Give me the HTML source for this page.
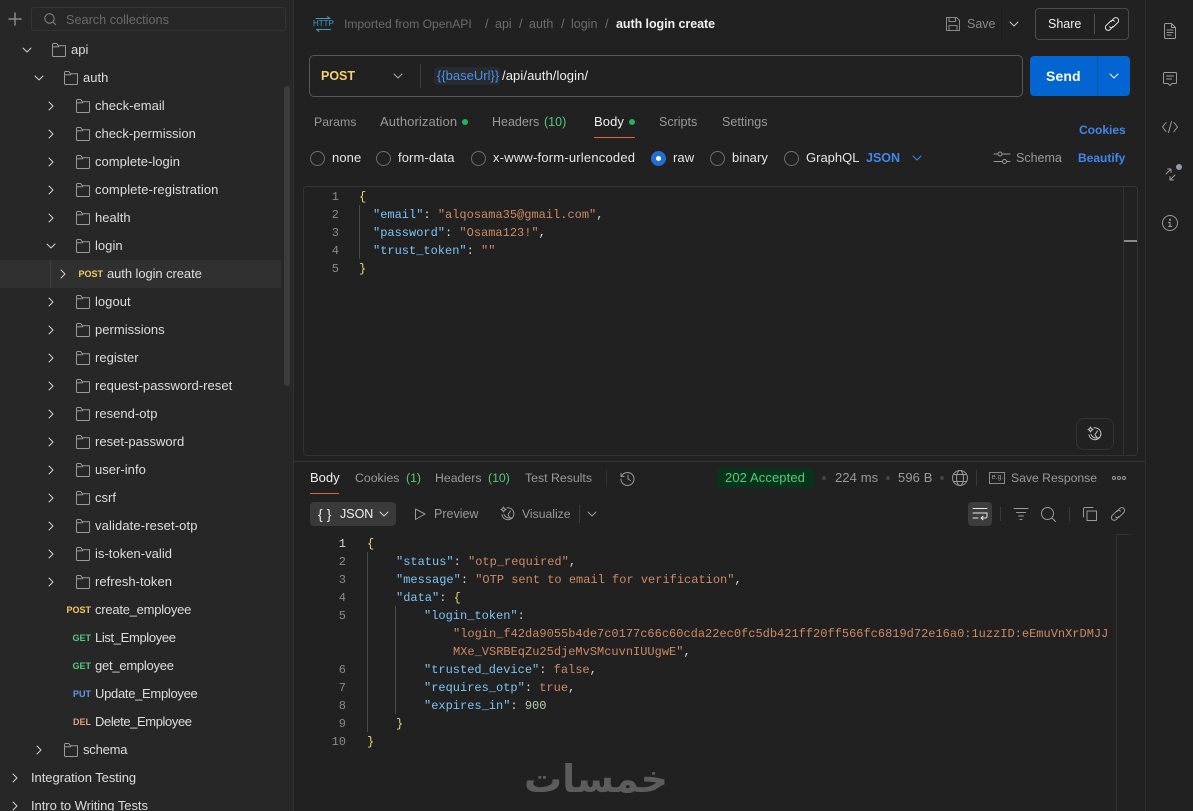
<!DOCTYPE html>
<html><head><meta charset="utf-8">
<style>
html,body{margin:0;padding:0;width:1193px;height:811px;overflow:hidden;background:#212121}
body{position:relative;font:13px/16px "Liberation Sans",sans-serif;color:#e6e6e6}
.t{position:absolute;white-space:nowrap;height:16px;letter-spacing:.1px}
.a{position:absolute}
svg.a{overflow:visible;fill:none;stroke:currentColor;stroke-width:1;stroke-linecap:round;stroke-linejoin:round}
.s{color:#dedede;letter-spacing:.03px}
.g{color:#9a9a9a}
.h{font-size:12.5px;letter-spacing:0}
.q{font-size:12.3px;letter-spacing:0}
.b{color:#3f87ee;font-weight:bold;font-size:12px;letter-spacing:0}
.gr{color:#4fc97f}
.m{position:absolute;font-size:9px;font-weight:bold;line-height:12px;height:12px;text-align:right;width:40px}
.c{position:absolute;white-space:pre;font:12px/18px "Liberation Mono",monospace;height:18px;color:#d4d4d4;margin-top:1px}
.n{position:absolute;width:24px;text-align:right;font:12px/18px "Liberation Mono",monospace;color:#8a8a8a;height:18px;margin-top:1px}
.k{color:#7cc4f4}.v{color:#ce8a63}.y{color:#e7d77a}
.r{position:absolute;width:13px;height:13px;border:1px solid #6e6e6e;border-radius:50%}
.l{position:absolute;background:#3a3a3a}
.ar{color:#d0d0d0}
</style></head><body>
<svg width="0" height="0" style="position:absolute">
<defs>
<symbol id="f" viewBox="0 0 14 14"><path d="M.5 12.5V1.5a1 1 0 0 1 1-1h3.2l1.8 2.3h7v9.7a1 1 0 0 1-1 1h-11a1 1 0 0 1-1-1zM.5 3.8h6l.5-1" /></symbol>
<symbol id="cr" viewBox="0 0 10 10"><path d="M3 1l4 4-4 4"/></symbol>
<symbol id="cd" viewBox="0 0 10 10"><path d="M1 3l4 4 4-4"/></symbol>
<symbol id="lk" viewBox="0 0 16 16"><path d="M7 5.500L9.800 2.500a2.800 2.800 0 0 1 4 4L9.500 10.800a2.800 2.800 0 0 1-4 0M9 10.500L6.200 13.500a2.800 2.800 0 0 1-4-4L6.500 5.200a2.800 2.800 0 0 1 4 0"/></symbol>
<symbol id="ai" viewBox="0 0 16 16"><path d="M7 1.800a6 6 0 1 1-5 7M10.500 5L8 8.500l2 3.500M4 8.500c2 3.500 5 4 7.500 3.200"/><path d="M3.500 1l.8 1.700 1.700.8-1.700.8-.8 1.700-.8-1.700L1 3.500l1.700-.8z"/></symbol>
</defs>
</svg>

<!-- sidebar -->
<div class="a" style="left:0;top:0;width:293px;height:811px;background:#272727"></div>
<div class="a" style="left:293px;top:0;width:1px;height:811px;background:#323232"></div>
<div class="a" style="left:284px;top:86px;width:6px;height:300px;background:#3c3c3c;border-radius:3px"></div>
<svg class="a" style="left:9px;top:13px;color:#8a8a8a;stroke-width:1.500" width="12" height="12"><path d="M6 0v12M0 6h12"/></svg>
<div class="a" style="left:31px;top:7px;width:253px;height:22px;border:1px solid #343434;border-radius:3px"></div>
<svg class="a" style="left:44px;top:13px;color:#8a8a8a" width="12" height="12"><circle cx="5.500" cy="5.500" r="4.700"/><path d="M9 9l2.500 2.500"/></svg>
<div class="t" style="left:66px;top:12px;color:#6a6a6a;font-size:12.700px;letter-spacing:0">Search collections</div>

<div class="a" style="left:0;top:260px;width:281px;height:28px;background:#303030"></div>
<div class="a" style="left:50px;top:260px;width:1px;height:28px;background:#3f3f3f"></div>

<svg class="a ar" style="left:22px;top:45px" width="10" height="10"><use href="#cd"/></svg>
<svg class="a ar" style="left:34px;top:73px" width="10" height="10"><use href="#cd"/></svg>
<svg class="a ar" style="left:46px;top:241px" width="10" height="10"><use href="#cd"/></svg>
<svg class="a ar" style="left:46px;top:101px" width="10" height="10"><use href="#cr"/></svg>
<svg class="a ar" style="left:46px;top:129px" width="10" height="10"><use href="#cr"/></svg>
<svg class="a ar" style="left:46px;top:157px" width="10" height="10"><use href="#cr"/></svg>
<svg class="a ar" style="left:46px;top:185px" width="10" height="10"><use href="#cr"/></svg>
<svg class="a ar" style="left:46px;top:213px" width="10" height="10"><use href="#cr"/></svg>
<svg class="a ar" style="left:58px;top:269px" width="10" height="10"><use href="#cr"/></svg>
<svg class="a ar" style="left:46px;top:297px" width="10" height="10"><use href="#cr"/></svg>
<svg class="a ar" style="left:46px;top:325px" width="10" height="10"><use href="#cr"/></svg>
<svg class="a ar" style="left:46px;top:353px" width="10" height="10"><use href="#cr"/></svg>
<svg class="a ar" style="left:46px;top:381px" width="10" height="10"><use href="#cr"/></svg>
<svg class="a ar" style="left:46px;top:409px" width="10" height="10"><use href="#cr"/></svg>
<svg class="a ar" style="left:46px;top:437px" width="10" height="10"><use href="#cr"/></svg>
<svg class="a ar" style="left:46px;top:465px" width="10" height="10"><use href="#cr"/></svg>
<svg class="a ar" style="left:46px;top:493px" width="10" height="10"><use href="#cr"/></svg>
<svg class="a ar" style="left:46px;top:521px" width="10" height="10"><use href="#cr"/></svg>
<svg class="a ar" style="left:46px;top:549px" width="10" height="10"><use href="#cr"/></svg>
<svg class="a ar" style="left:46px;top:577px" width="10" height="10"><use href="#cr"/></svg>
<svg class="a ar" style="left:34px;top:745px" width="10" height="10"><use href="#cr"/></svg>
<svg class="a ar" style="left:10px;top:773px" width="10" height="10"><use href="#cr"/></svg>
<svg class="a ar" style="left:10px;top:801px" width="10" height="10"><use href="#cr"/></svg>

<svg class="a g" style="left:52px;top:43px" width="14" height="14"><use href="#f"/></svg>
<svg class="a g" style="left:64px;top:71px" width="14" height="14"><use href="#f"/></svg>
<svg class="a g" style="left:76px;top:99px" width="14" height="14"><use href="#f"/></svg>
<svg class="a g" style="left:76px;top:127px" width="14" height="14"><use href="#f"/></svg>
<svg class="a g" style="left:76px;top:155px" width="14" height="14"><use href="#f"/></svg>
<svg class="a g" style="left:76px;top:183px" width="14" height="14"><use href="#f"/></svg>
<svg class="a g" style="left:76px;top:211px" width="14" height="14"><use href="#f"/></svg>
<svg class="a g" style="left:76px;top:239px" width="14" height="14"><use href="#f"/></svg>
<svg class="a g" style="left:76px;top:295px" width="14" height="14"><use href="#f"/></svg>
<svg class="a g" style="left:76px;top:323px" width="14" height="14"><use href="#f"/></svg>
<svg class="a g" style="left:76px;top:351px" width="14" height="14"><use href="#f"/></svg>
<svg class="a g" style="left:76px;top:379px" width="14" height="14"><use href="#f"/></svg>
<svg class="a g" style="left:76px;top:407px" width="14" height="14"><use href="#f"/></svg>
<svg class="a g" style="left:76px;top:435px" width="14" height="14"><use href="#f"/></svg>
<svg class="a g" style="left:76px;top:463px" width="14" height="14"><use href="#f"/></svg>
<svg class="a g" style="left:76px;top:491px" width="14" height="14"><use href="#f"/></svg>
<svg class="a g" style="left:76px;top:519px" width="14" height="14"><use href="#f"/></svg>
<svg class="a g" style="left:76px;top:547px" width="14" height="14"><use href="#f"/></svg>
<svg class="a g" style="left:76px;top:575px" width="14" height="14"><use href="#f"/></svg>
<svg class="a g" style="left:64px;top:743px" width="14" height="14"><use href="#f"/></svg>

<div class="t s" style="left:71px;top:42px">api</div>
<div class="t s" style="left:83px;top:70px">auth</div>
<div class="t s" style="left:95px;top:98px">check-email</div>
<div class="t s" style="left:95px;top:126px;letter-spacing:-.02px">check-permission</div>
<div class="t s" style="left:95px;top:154px">complete-login</div>
<div class="t s" style="left:95px;top:182px;letter-spacing:.1px">complete-registration</div>
<div class="t s" style="left:95px;top:210px">health</div>
<div class="t s" style="left:95px;top:238px">login</div>
<div class="m" style="left:63px;top:268px;color:#f2cb62">POST</div>
<div class="t s" style="left:107px;top:266px;letter-spacing:-.08px">auth login create</div>
<div class="t s" style="left:95px;top:294px">logout</div>
<div class="t s" style="left:95px;top:322px">permissions</div>
<div class="t s" style="left:95px;top:350px">register</div>
<div class="t s" style="left:95px;top:378px">request-password-reset</div>
<div class="t s" style="left:95px;top:406px">resend-otp</div>
<div class="t s" style="left:95px;top:434px">reset-password</div>
<div class="t s" style="left:95px;top:462px">user-info</div>
<div class="t s" style="left:95px;top:490px">csrf</div>
<div class="t s" style="left:95px;top:518px;letter-spacing:.12px">validate-reset-otp</div>
<div class="t s" style="left:95px;top:546px">is-token-valid</div>
<div class="t s" style="left:95px;top:574px">refresh-token</div>
<div class="m" style="left:51px;top:604px;color:#f2cb62">POST</div>
<div class="t s" style="left:95px;top:602px;letter-spacing:-.24px">create_employee</div>
<div class="m" style="left:51px;top:632px;color:#4fc97f">GET</div>
<div class="t s" style="left:95px;top:630px;letter-spacing:-.36px">List_Employee</div>
<div class="m" style="left:51px;top:660px;color:#4fc97f">GET</div>
<div class="t s" style="left:95px;top:658px;letter-spacing:-.24px">get_employee</div>
<div class="m" style="left:51px;top:688px;color:#5a9ae8">PUT</div>
<div class="t s" style="left:95px;top:686px;letter-spacing:-.3px">Update_Employee</div>
<div class="m" style="left:51px;top:716px;color:#e0a27c">DEL</div>
<div class="t s" style="left:95px;top:714px;letter-spacing:-.4px">Delete_Employee</div>
<div class="t s" style="left:83px;top:742px;letter-spacing:-.2px">schema</div>
<div class="t s" style="left:31px;top:770px;letter-spacing:-.05px">Integration Testing</div>
<div class="t s" style="left:31px;top:798px;letter-spacing:-.05px">Intro to Writing Tests</div>

<!-- header -->
<svg class="a" style="left:315px;top:16px;color:#3f9fc0" width="16" height="16"><path d="M1 2.500h14l-2.500-1.800M15.500 13.500H1.500l2.500 1.800"/></svg>
<div class="a" style="left:313px;top:20px;width:20px;font-size:8px;line-height:8px;height:8px;color:#3f9fc0;text-align:center">HTTP</div>
<div class="t" style="left:344px;top:16px;color:#6c6c6c;font-size:12.100px;letter-spacing:0">Imported from OpenAPI</div>
<div class="t" style="left:485px;top:16px;color:#6c6c6c">/</div>
<div class="t h" style="left:495px;top:16px;color:#6c6c6c">api</div>
<div class="t" style="left:519px;top:16px;color:#6c6c6c">/</div>
<div class="t h" style="left:529px;top:16px;color:#6c6c6c">auth</div>
<div class="t" style="left:561px;top:16px;color:#6c6c6c">/</div>
<div class="t h" style="left:571px;top:16px;color:#6c6c6c">login</div>
<div class="t" style="left:605px;top:16px;color:#6c6c6c">/</div>
<div class="t" style="left:616px;top:16px;color:#f0f0f0;font-weight:bold;font-size:12.500px;letter-spacing:-.06px">auth login create</div>

<svg class="a" style="left:946px;top:17px;color:#8a8a8a" width="14" height="14"><path d="M.5 13.500V.5h10l3 3v10zM3 .5v4h6.500v-4M3 13.500V8.500h8v5"/></svg>
<div class="t h" style="left:967px;top:16px;color:#8a8a8a">Save</div>
<div class="l" style="left:1001px;top:8px;width:1px;height:32px;background:#1b1b1b"></div>
<svg class="a" style="left:1009px;top:19px;color:#c8c8c8" width="10" height="10"><use href="#cd"/></svg>
<div class="a" style="left:1035px;top:8px;width:92px;height:30px;border:1px solid #4c4c4c;border-radius:4px"></div>
<div class="t h" style="left:1048px;top:16px;color:#f0f0f0">Share</div>
<div class="l" style="left:1094px;top:14px;width:1px;height:20px;background:#505050"></div>
<svg class="a" style="left:1104px;top:16px;color:#e0e0e0" width="16" height="16"><use href="#lk"/></svg>

<!-- url -->
<div class="a" style="left:309px;top:55px;width:712px;height:40px;border:1px solid #565656;border-radius:5px"></div>
<div class="t" style="left:321px;top:68px;color:#f5d06e;font-weight:bold;font-size:12.500px;letter-spacing:0">POST</div>
<svg class="a" style="left:393px;top:71px;color:#a8a8a8" width="10" height="10"><use href="#cd"/></svg>
<div class="l" style="left:420px;top:64px;width:1px;height:24px;background:#3d3d3d"></div>
<div class="a" style="left:434px;top:67px;width:66px;height:18px;background:#272a2e;border-radius:4px"></div>
<div class="t" style="left:437px;top:68px;color:#4d90ee;letter-spacing:0">{{baseUrl}}</div>
<div class="t" style="left:502px;top:68px;color:#f0f0f0">/api/auth/login/</div>
<div class="a" style="left:1030px;top:56px;width:100px;height:40px;background:#0265d2;border-radius:4px"></div>
<div class="a" style="left:1097px;top:56px;width:1px;height:40px;background:#0a4f9e"></div>
<div class="t" style="left:1046px;top:68px;color:#fff;font-weight:bold;font-size:14px">Send</div>
<svg class="a" style="left:1109px;top:71px;color:#fff" width="10" height="10"><use href="#cd"/></svg>

<!-- tabs -->
<div class="t g q" style="left:314px;top:114px">Params</div>
<div class="t g" style="left:380px;top:114px">Authorization</div>
<div class="a" style="left:462px;top:119px;width:6px;height:6px;border-radius:50%;background:#22b35c"></div>
<div class="t g h" style="left:492px;top:114px">Headers</div>
<div class="t gr h" style="left:544px;top:114px">(10)</div>
<div class="t" style="left:594px;top:114px;color:#f0f0f0">Body</div>
<div class="a" style="left:629px;top:119px;width:6px;height:6px;border-radius:50%;background:#22b35c"></div>
<div class="a" style="left:594px;top:137px;width:41px;height:1px;background:#e0633d"></div>
<div class="t g h" style="left:659px;top:114px">Scripts</div>
<div class="t g h" style="left:722px;top:114px;letter-spacing:.05px">Settings</div>
<div class="t b" style="left:1079px;top:122px">Cookies</div>

<!-- radios -->
<div class="r" style="left:310px;top:151px"></div>
<div class="t" style="left:332px;top:150px">none</div>
<div class="r" style="left:376px;top:151px"></div>
<div class="t" style="left:398px;top:150px">form-data</div>
<div class="r" style="left:471px;top:151px"></div>
<div class="t" style="left:493px;top:150px;letter-spacing:.2px">x-www-form-urlencoded</div>
<div class="a" style="left:651px;top:151px;width:5px;height:5px;border:5px solid #1f6fd6;border-radius:50%;background:#fff"></div>
<div class="t" style="left:673px;top:150px">raw</div>
<div class="r" style="left:710px;top:151px"></div>
<div class="t" style="left:732px;top:150px">binary</div>
<div class="r" style="left:784px;top:151px"></div>
<div class="t" style="left:806px;top:150px;letter-spacing:0">GraphQL</div>
<div class="t b" style="left:866px;top:150px;font-size:12.500px">JSON</div>
<svg class="a" style="left:912px;top:153px;color:#3f87ee" width="10" height="10"><use href="#cd"/></svg>
<svg class="a g" style="left:994px;top:151px" width="16" height="14"><path d="M0 3h4M8 3h8M0 10.500h8.500M12.500 10.500H16"/><circle cx="6" cy="3" r="2"/><circle cx="10.500" cy="10.500" r="2"/></svg>
<div class="t g h" style="left:1016px;top:150px">Schema</div>
<div class="t b" style="left:1078px;top:150px">Beautify</div>

<!-- editor -->
<div class="a" style="left:303px;top:186px;width:833px;height:268px;border:1px solid #333;border-radius:4px"></div>
<div class="a" style="left:1123px;top:187px;width:1px;height:268px;background:#333"></div>
<div class="a" style="left:1124px;top:240px;width:13px;height:2px;background:#8a8a8a"></div>
<div class="a" style="left:359px;top:205px;width:1px;height:54px;background:#4a4a4a"></div>
<div class="n" style="left:315px;top:187px">1</div><div class="c y" style="left:359px;top:187px">{</div>
<div class="n" style="left:315px;top:205px">2</div><div class="c" style="left:373px;top:205px"><span class="k">"email"</span>: <span class="v">"alqosama35@gmail.com"</span>,</div>
<div class="n" style="left:315px;top:223px">3</div><div class="c" style="left:373px;top:223px"><span class="k">"password"</span>: <span class="v">"Osama123!"</span>,</div>
<div class="n" style="left:315px;top:241px">4</div><div class="c" style="left:373px;top:241px"><span class="k">"trust_token"</span>: <span class="v">""</span></div>
<div class="n" style="left:315px;top:259px">5</div><div class="c y" style="left:359px;top:259px">}</div>
<div class="a" style="left:1076px;top:418px;width:36px;height:30px;border:1px solid #333;border-radius:8px"></div>
<svg class="a" style="left:1087px;top:426px;color:#c4c4c4" width="16" height="16"><use href="#ai"/></svg>

<!-- response -->
<div class="a" style="left:294px;top:461px;width:851px;height:1px;background:#333"></div>
<div class="t" style="left:310px;top:470px;color:#f0f0f0;letter-spacing:0">Body</div>
<div class="a" style="left:310px;top:493px;width:29px;height:1px;background:#e0633d"></div>
<div class="t g q" style="left:355px;top:470px">Cookies</div><div class="t gr q" style="left:406px;top:470px">(1)</div>
<div class="t g q" style="left:435px;top:470px">Headers</div><div class="t gr q" style="left:488px;top:470px">(10)</div>
<div class="t g q" style="left:525px;top:470px">Test Results</div>
<div class="l" style="left:606px;top:470px;width:1px;height:16px;background:#333"></div>
<svg class="a g" style="left:620px;top:471px" width="15" height="15"><path d="M1.500 5.500A6.500 6.500 0 1 1 1 8M1 2.500v3h3M8 4v4l2.500 1.500"/></svg>

<div class="a" style="left:717px;top:468px;width:97px;height:20px;background:#07331a;border-radius:3px"></div>
<div class="t" style="left:725px;top:470px;color:#52cc80">202 Accepted</div>
<div class="a" style="left:822px;top:476px;width:4px;height:4px;border-radius:50%;background:#444"></div>
<div class="t g" style="left:835px;top:470px">224 ms</div>
<div class="a" style="left:886px;top:476px;width:4px;height:4px;border-radius:50%;background:#444"></div>
<div class="t g" style="left:898px;top:470px">596 B</div>
<div class="a" style="left:940px;top:476px;width:4px;height:4px;border-radius:50%;background:#444"></div>
<svg class="a g" style="left:952px;top:470px" width="16" height="16"><circle cx="8" cy="8" r="7.500"/><ellipse cx="8" cy="8" rx="3.500" ry="7.500"/><path d="M1.500 4.500h13M1.500 11.500h13"/></svg>
<div class="l" style="left:976px;top:470px;width:1px;height:16px;background:#3a3a3a"></div>
<div class="a" style="left:989px;top:472px;width:14px;height:10px;border:1px solid #8a8a8a"></div>
<div class="a" style="left:990px;top:472px;width:15px;height:11px;font-size:7px;line-height:11px;text-align:center;color:#9a9a9a">e.g.</div>
<div class="t g" style="left:1011px;top:470px;font-size:12.200px;letter-spacing:0">Save Response</div>
<svg class="a g" style="left:1112px;top:475px" width="14" height="6"><circle cx="2" cy="3" r="1.500"/><circle cx="7" cy="3" r="1.500"/><circle cx="12" cy="3" r="1.500"/></svg>

<div class="a" style="left:310px;top:502px;width:86px;height:24px;background:#3a3a3a;border-radius:4px"></div>
<div class="t" style="left:318px;top:506px;color:#eee;font-size:14px">{ }</div>
<div class="t" style="left:340px;top:506px;color:#f0f0f0;font-size:12.500px;letter-spacing:0">JSON</div>
<svg class="a" style="left:379px;top:509px;color:#d0d0d0" width="10" height="10"><use href="#cd"/></svg>
<svg class="a g" style="left:414px;top:508px" width="12" height="12"><path d="M1.500 1v10.500L11 6z"/></svg>
<div class="t g h" style="left:434px;top:506px">Preview</div>
<svg class="a g" style="left:500px;top:506px" width="16" height="16"><use href="#ai"/></svg>
<div class="t g" style="left:522px;top:506px;font-size:12.200px;letter-spacing:0">Visualize</div>
<div class="l" style="left:579px;top:505px;width:1px;height:18px;background:#3a3a3a"></div>
<svg class="a g" style="left:587px;top:509px" width="10" height="10"><use href="#cd"/></svg>

<div class="a" style="left:968px;top:502px;width:24px;height:24px;background:#3d3d3d;border-radius:4px"></div>
<svg class="a" style="left:973px;top:508px;color:#e8e8e8" width="14" height="13"><path d="M0 .5h14M0 5h14M0 10h5M14 5v3.500a1.500 1.500 0 0 1-1.500 1.500H8l2-1.800M8 10l2 1.800"/></svg>
<div class="l" style="left:1000px;top:507px;width:1px;height:14px;background:#3a3a3a"></div>
<svg class="a g" style="left:1014px;top:508px" width="14" height="12"><path d="M0 .5h14M2.500 4.500h9M4.500 8h5M6 11.500h2"/></svg>
<svg class="a g" style="left:1041px;top:507px" width="15" height="15"><circle cx="6.500" cy="6.500" r="6"/><path d="M11 11l3.500 3.500"/></svg>
<div class="l" style="left:1069px;top:507px;width:1px;height:14px;background:#3a3a3a"></div>
<svg class="a g" style="left:1083px;top:507px" width="14" height="14"><path d="M10 .5H2A1.500 1.500 0 0 0 .5 2v8M4 4h9.500v9.500H4z"/></svg>
<svg class="a g" style="left:1110px;top:506px" width="16" height="16"><use href="#lk"/></svg>

<!-- response code -->
<div class="a" style="left:1116px;top:534px;width:14px;height:1px;background:#333"></div>
<div class="a" style="left:1116px;top:534px;width:1px;height:277px;background:#333"></div>
<div class="a" style="left:367px;top:552px;width:1px;height:180px;background:#4a4a4a"></div>
<div class="a" style="left:395px;top:606px;width:1px;height:108px;background:#4a4a4a"></div>
<div class="n" style="left:322px;top:534px;color:#d8d8d8">1</div><div class="c y" style="left:367px;top:534px">{</div>
<div class="n" style="left:322px;top:552px">2</div><div class="c" style="left:396px;top:552px"><span class="k">"status"</span>: <span class="v">"otp_required"</span>,</div>
<div class="n" style="left:322px;top:570px">3</div><div class="c" style="left:396px;top:570px"><span class="k">"message"</span>: <span class="v">"OTP sent to email for verification"</span>,</div>
<div class="n" style="left:322px;top:588px">4</div><div class="c" style="left:396px;top:588px"><span class="k">"data"</span>: <span class="y">{</span></div>
<div class="n" style="left:322px;top:606px">5</div><div class="c" style="left:424px;top:606px"><span class="k">"login_token"</span>:</div>
<div class="c v" style="left:453px;top:624px">"login_f42da9055b4de7c0177c66c60cda22ec0fc5db421ff20ff566fc6819d72e16a0:1uzzID:eEmuVnXrDMJJ</div>
<div class="c" style="left:453px;top:642px"><span class="v">MXe_VSRBEqZu25djeMvSMcuvnIUUgwE"</span>,</div>
<div class="n" style="left:322px;top:660px">6</div><div class="c" style="left:424px;top:660px"><span class="k">"trusted_device"</span>: <span class="v">false</span>,</div>
<div class="n" style="left:322px;top:678px">7</div><div class="c" style="left:424px;top:678px"><span class="k">"requires_otp"</span>: <span class="v">true</span>,</div>
<div class="n" style="left:322px;top:696px">8</div><div class="c" style="left:424px;top:696px"><span class="k">"expires_in"</span>: <span style="color:#b5cea8">900</span></div>
<div class="n" style="left:322px;top:714px">9</div><div class="c y" style="left:396px;top:714px">}</div>
<div class="n" style="left:322px;top:732px">10</div><div class="c y" style="left:367px;top:732px">}</div>

<!-- watermark -->
<div class="a" dir="rtl" style="left:516px;top:754px;width:160px;height:50px;text-align:center;font:bold 38px/50px 'DejaVu Sans',sans-serif;color:#5c5c5c">خمسات</div>

<!-- right rail -->
<div class="a" style="left:1145px;top:0;width:1px;height:811px;background:#303030"></div>
<svg class="a g" style="left:1164px;top:23px" width="12" height="16"><path d="M.5 1.500a1 1 0 0 1 1-1h6l4 4v10a1 1 0 0 1-1 1h-9a1 1 0 0 1-1-1zM7.500.5v4h4M3 7h6M3 9.500h6M3 12h4"/></svg>
<svg class="a g" style="left:1163px;top:72px" width="14" height="14"><path d="M.5 1.500a1 1 0 0 1 1-1h11a1 1 0 0 1 1 1v9a1 1 0 0 1-1 1H9l-2 2-2-2H1.500a1 1 0 0 1-1-1zM3.500 4h7M3.500 7h5"/></svg>
<svg class="a g" style="left:1162px;top:121px" width="16" height="12"><path d="M4 1.500L.5 6 4 10.500M12 1.500L15.500 6 12 10.500M9.500.5l-3 11"/></svg>
<svg class="a g" style="left:1165px;top:168px" width="11" height="13"><path d="M1 6l5-5M2.500 1H6v3.500M10 7l-5 5M8.500 12H5V8.500"/></svg>
<div class="a" style="left:1176px;top:164px;width:6px;height:6px;border-radius:50%;background:#8f9bb0"></div>
<svg class="a g" style="left:1162px;top:215px" width="16" height="16"><circle cx="8" cy="8" r="7.500"/><path d="M6.500 7.500H8v4M6.500 11.500h3"/><circle cx="8" cy="4.800" r=".6"/></svg>
</body></html>
